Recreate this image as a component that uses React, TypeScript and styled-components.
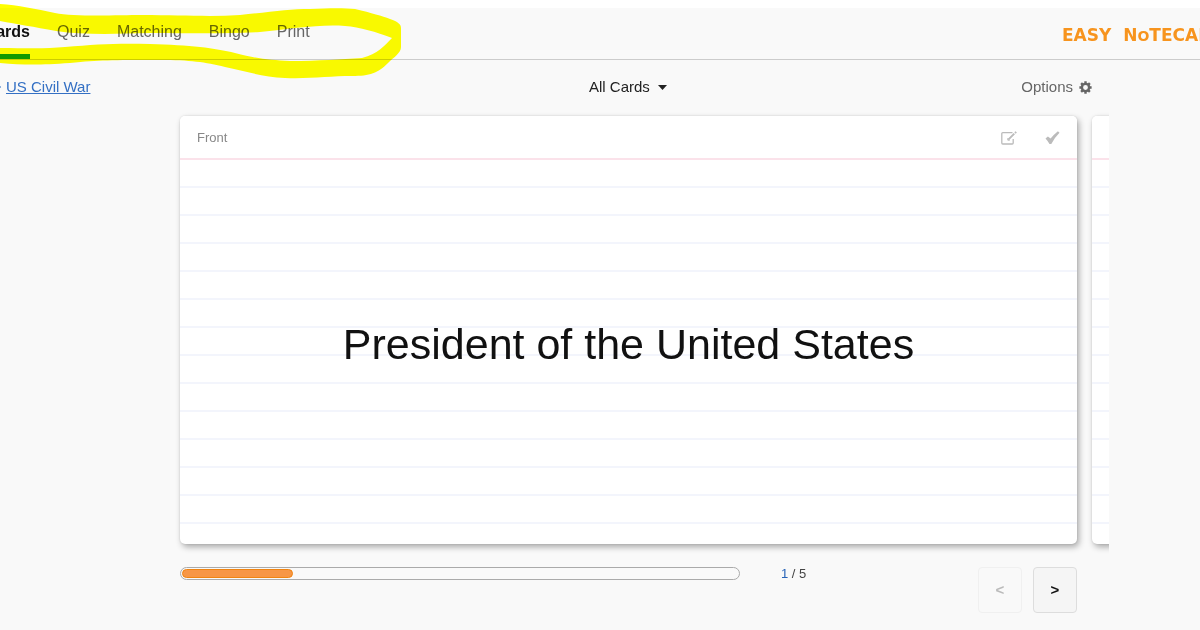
import React from "react";
import styled, { createGlobalStyle } from "styled-components";

const GlobalStyle = createGlobalStyle`
  * { box-sizing: border-box; }
  body {
    margin: 0;
    background: #f9f9f9;
    color: #222;
    font: 15px/20px "Liberation Sans", Arial, sans-serif;
    overflow-x: hidden;
  }
  button, select { font: inherit; color: inherit; }
`;

const Page = styled.div`
  position: relative;
  border-top: 8px solid #fff;
  overflow-x: clip;
`;

const Header = styled.header`
  display: flex;
  justify-content: space-between;
  height: 52px;
  border-bottom: 1px solid #ccc;
`;

const Tabs = styled.nav`
  display: flex;
  gap: 27px;
`;

const Tab = styled.a<{ $active?: boolean }>`
  display: flex;
  justify-content: flex-end;
  width: ${(p) => (p.$active ? "30px" : "auto")};
  padding-top: 14px;
  font-size: 16px;
  font-weight: ${(p) => (p.$active ? 700 : 400)};
  color: ${(p) => (p.$active ? "#111" : "#666")};
  border-bottom: 5px solid ${(p) => (p.$active ? "#139a00" : "transparent")};
  text-decoration: none;
  white-space: nowrap;
`;

const Logo = styled.a`
  width: 138px;
  padding-top: 17px;
  font: 700 17px/20px "DejaVu Sans", "Liberation Sans", sans-serif;
  color: #f7941e;
  text-decoration: none;
  white-space: nowrap;
`;

const LogoSmall = styled.span`
  font-size: 14px;
`;

const Marker = styled.svg`
  position: absolute;
  top: -8px;
  left: 0;
  pointer-events: none;
  mix-blend-mode: multiply;
`;

const Toolbar = styled.div`
  display: grid;
  grid-template-columns: 288px 1fr 124px;
  align-items: center;
  height: 56px;
  padding: 0 108px 2px 0;
`;

const Crumb = styled.div`
  display: flex;
  align-items: center;
  gap: 5px;

  &::before {
    content: "";
    width: 1px;
    height: 2px;
    background: #8fb1dd;
  }
`;

const CrumbLink = styled.a`
  color: #3470c4;
`;

const Filter = styled.label`
  display: grid;
  justify-self: center;
  align-items: center;

  & > * { grid-area: 1 / 1; }
  & > svg { justify-self: end; pointer-events: none; }
`;

const FilterSelect = styled.select`
  appearance: none;
  border: 0;
  padding: 0 17px 0 0;
  background: none;
`;

const Options = styled.button`
  display: flex;
  align-items: center;
  justify-self: end;
  gap: 6px;
  border: 0;
  padding: 0;
  background: none;
  color: #666;
`;

const Stage = styled.main`
  display: flex;
  gap: 15px;
  padding: 0 91px 0 180px;
`;

const Card = styled.article`
  flex: 1;
  display: flex;
  flex-direction: column;
  min-width: 0;
  height: 428px;
  border-radius: 5px;
  background: repeating-linear-gradient(#fff 0 26px, #f3f5fc 26px 28px) 0 44px no-repeat #fff;
  box-shadow: 2px 3px 6px rgba(0, 0, 0, 0.32), 0 0 2px rgba(0, 0, 0, 0.12);
  overflow: hidden;
`;

const NextCard = styled.div`
  display: flex;
  width: 17px;
  clip-path: inset(-12px 0 -12px -12px);
`;

const NextCardBody = styled(Card)`
  flex: 0 0 40px;
`;

const CardHead = styled.header`
  display: flex;
  align-items: center;
  justify-content: space-between;
  height: 44px;
  flex: none;
  padding: 2px 17px 0;
  border-bottom: 2px solid #fbe2ea;
  background: #fff;
  font-size: 13px;
  color: #888;
`;

const CardActions = styled.div`
  display: flex;
  gap: 28px;
`;

const IconButton = styled.button`
  display: flex;
  border: 0;
  padding: 0;
  background: none;
  color: #bbb;
`;

const Term = styled.h1`
  flex: 1;
  display: flex;
  align-items: center;
  justify-content: center;
  margin: 0;
  padding-bottom: 16px;
  font-size: 43px;
  line-height: 52px;
  font-weight: 400;
  color: #111;
`;

const Footer = styled.footer`
  display: flex;
  align-items: flex-start;
  padding: 23px 123px 16px 180px;
`;

const Track = styled.div`
  flex: 0 1 560px;
  height: 13px;
  padding: 1px;
  border: 1px solid #aaa;
  border-radius: 7px;
`;

const Bar = styled.div`
  height: 9px;
  border: 1px solid #f08410;
  border-radius: 5px;
  background: #f79646;
`;

const Count = styled.div`
  flex: 1;
  padding-left: 41px;
  font-size: 13px;
  line-height: 14px;
  color: #444;
`;

const Current = styled.span`
  color: #2763b8;
`;

const Pager = styled.div`
  display: flex;
  gap: 11px;
`;

const PageButton = styled.button`
  width: 44px;
  height: 46px;
  padding: 0;
  border: 1px solid #ddd;
  border-radius: 4px;
  background: #f5f5f5;
  font-size: 15px;
  font-weight: 700;
  color: #111;

  &:disabled {
    border-color: #f0f0f0;
    background: #f9f9f9;
    color: #bbb;
  }
`;

const current = 1;
const total = 5;

export default function App() {
  return (
    <>
      <GlobalStyle />
      <Page>
        <Header>
          <Tabs>
            <Tab href="#cards" $active>Cards</Tab>
            <Tab href="#quiz">Quiz</Tab>
            <Tab href="#matching">Matching</Tab>
            <Tab href="#bingo">Bingo</Tab>
            <Tab href="#print">Print</Tab>
          </Tabs>
          <Logo href="#home">EASY&nbsp; N<LogoSmall>O</LogoSmall>TECARDS</Logo>
        </Header>
        <Marker width="402" height="80" viewBox="0 0 402 80" aria-hidden="true">
          <path
            fill="#ffff00"
            fillRule="evenodd"
            d="M0 4 C18 5 36 9 55 13 C75 17 118 15 142 15 C180 15 210 17 240 15 C270 12 290 9 310 9 C330 8 345 8 355 9 C372 13 382 16 390 19 C398 22 401 24 401 28 L401 47 C401 53 394 57 388 63 C378 73 370 76 352 76 C330 76 310 79 285 78 C262 77 245 71 225 67 C205 62 190 60 160 60 C110 60 100 60 70 63 C40 65 24 65 0 63 L0 48 C24 48 45 49 65 47 C97 44 120 43 150 44 C190 45 215 48 235 53 C258 59 270 60 290 61 C320 61 340 59 362 58 C378 54 384 46 392 38 C376 32 360 27 345 26 C320 24 290 29 260 32 C226 34 190 33 151 33 C113 34 83 35 56 31 C34 27 17 24 0 21 Z"
          />
        </Marker>
        <Toolbar>
          <Crumb>
            <CrumbLink href="#set">US Civil War</CrumbLink>
          </Crumb>
          <Filter>
            <FilterSelect aria-label="Cards to show">
              <option>All Cards</option>
            </FilterSelect>
            <svg width="9" height="5" viewBox="0 0 9 5" aria-hidden="true">
              <path d="M0 0H9L4.5 5Z" fill="#222" />
            </svg>
          </Filter>
          <Options type="button">
            Options
            <svg width="13" height="13" viewBox="0 0 14 14" aria-hidden="true">
              <g stroke="currentColor" fill="none">
                <circle cx="7" cy="7" r="3.9" strokeWidth="2.6" />
                <path
                  strokeWidth="2.6"
                  d="M7 .4V3M7 11v2.6M.4 7H3M11 7h2.6M2.3 2.3l1.6 1.6M10.1 10.1l1.6 1.6M11.7 2.3l-1.6 1.6M3.9 10.1l-1.6 1.6"
                />
              </g>
            </svg>
          </Options>
        </Toolbar>
        <Stage>
          <Card>
            <CardHead>
              Front
              <CardActions>
                <IconButton type="button" aria-label="Edit card">
                  <svg width="16" height="14" viewBox="0 0 16 14" fill="none" stroke="currentColor" aria-hidden="true">
                    <path strokeWidth="1.3" d="M11.5 1.6H1.8Q.8 1.6.8 2.600v9.4q0 1 1 1h9.4q1 0 1-1V8" />
                    <path strokeWidth="1.9" d="M7.3 8.7L13.3 2.700M14 2l1.2-1.2" />
                    <path strokeWidth="1" d="M6.8 7.2v2h2" />
                  </svg>
                </IconButton>
                <IconButton type="button" aria-label="Mark as known">
                  <svg width="15" height="14" viewBox="0 0 15 14" aria-hidden="true">
                    <path d="M.5 7.5L2.9 5.4L5.600 7.600Q9 3.400 12.900.3L14.500 1.700Q9.500 6.600 6.300 13H4.500Q3 10.200.5 7.500Z" fill="currentColor" />
                  </svg>
                </IconButton>
              </CardActions>
            </CardHead>
            <Term>President of the United States</Term>
          </Card>
          <NextCard aria-hidden="true">
            <NextCardBody>
              <CardHead />
            </NextCardBody>
          </NextCard>
        </Stage>
        <Footer>
          <Track role="progressbar" aria-label="Progress" aria-valuemin={0} aria-valuemax={total} aria-valuenow={current}>
            <Bar style={{ width: `${(current / total) * 100}%` }} />
          </Track>
          <Count>
            <Current>{current}</Current> / {total}
          </Count>
          <Pager>
            <PageButton type="button" aria-label="Previous card" disabled>&lt;</PageButton>
            <PageButton type="button" aria-label="Next card">&gt;</PageButton>
          </Pager>
        </Footer>
      </Page>
    </>
  );
}
